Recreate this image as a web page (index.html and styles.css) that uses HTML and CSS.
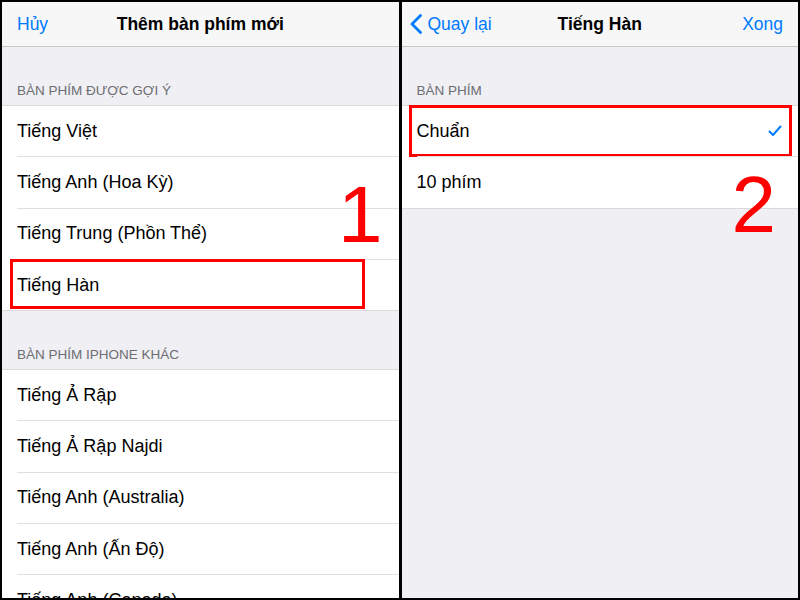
FILE: index.html
```html
<!DOCTYPE html>
<html>
<head>
<meta charset="utf-8">
<link rel="stylesheet" href="styles.css">
</head>
<body>
<div class="frame">
  <section class="panel">
    <header class="nav">
      <span class="nav-left">Hủy</span>
      <span class="nav-title">Thêm bàn phím mới</span>
      <span class="nav-right"></span>
    </header>
    <div class="section-head">BÀN PHÍM ĐƯỢC GỢI Ý</div>
    <ul class="list">
      <li class="row">Tiếng Việt</li>
      <li class="row">Tiếng Anh (Hoa Kỳ)</li>
      <li class="row">Tiếng Trung (Phồn Thể)</li>
      <li class="row hl hl-left">Tiếng Hàn</li>
    </ul>
    <div class="section-head">BÀN PHÍM IPHONE KHÁC</div>
    <ul class="list">
      <li class="row">Tiếng Ả Rập</li>
      <li class="row">Tiếng Ả Rập Najdi</li>
      <li class="row">Tiếng Anh (Australia)</li>
      <li class="row">Tiếng Anh (Ấn Độ)</li>
      <li class="row">Tiếng Anh (Canada)</li>
    </ul>
    <div class="step step-1">1</div>
  </section>
  <section class="panel">
    <header class="nav">
      <span class="nav-left back">
        <svg class="chev" width="14" height="20" viewBox="0 0 14 20"><path d="M11.5 1.5 L3 10 L11.5 18.5" fill="none" stroke="#007aff" stroke-width="2.8" stroke-linecap="round" stroke-linejoin="round"/></svg>
        Quay lại
      </span>
      <span class="nav-title">Tiếng Hàn</span>
      <span class="nav-right">Xong</span>
    </header>
    <div class="section-head">BÀN PHÍM</div>
    <ul class="list">
      <li class="row hl hl-right">Chuẩn
        <svg class="check" width="14" height="12" viewBox="0 0 14 12"><path d="M1.5 6.5 L5 10 L12.5 1.5" fill="none" stroke="#007aff" stroke-width="2" stroke-linecap="round" stroke-linejoin="round"/></svg>
      </li>
      <li class="row">10 phím</li>
    </ul>
    <div class="step step-2">2</div>
  </section>
</div>
</body>
</html>
```
FILE: styles.css
```css
*, *::before, *::after { box-sizing: border-box; }
html, body { margin: 0; padding: 0; }
body {
  width: 800px;
  height: 600px;
  overflow: hidden;
  font-family: "Liberation Sans", Arial, sans-serif;
  background: #000;
}
.frame {
  width: 800px;
  height: 600px;
  display: flex;
  gap: 3px;
  padding: 2px;
  background: #000;
}
.panel {
  flex: 1;
  position: relative;
  background: #efeff4;
  overflow: hidden;
}
.nav {
  height: 45px;
  background: #f7f7f7;
  border-bottom: 1px solid #c8c7cc;
  display: flex;
  align-items: center;
  justify-content: space-between;
  padding: 0 15px;
  position: relative;
}
.nav-left, .nav-right {
  color: #007aff;
  font-size: 17.5px;
  display: flex;
  align-items: center;
  position: relative;
  z-index: 1;
}
.back { margin-left: -8px; }
.chev { margin-right: 5px; }
.nav-title {
  position: absolute;
  left: 0;
  right: 0;
  text-align: center;
  font-size: 17.5px;
  font-weight: bold;
  color: #000;
  pointer-events: none;
}
.section-head {
  height: 59px;
  display: flex;
  align-items: flex-end;
  padding: 0 0 7px 15px;
  font-size: 13.5px;
  color: #6d6d72;
  border-bottom: 1px solid #d9d9de;
}
.list {
  list-style: none;
  margin: 0;
  padding: 0;
  background: #fff;
  border-bottom: 1px solid #d9d9de;
}
.row {
  height: 50.3px;
  display: flex;
  align-items: center;
  justify-content: space-between;
  padding: 0 16px 0 15px;
  font-size: 18px;
  color: #000;
  position: relative;
}
.row + .row { margin-top: 1px; }
.row + .row::before {
  content: "";
  position: absolute;
  top: -1px;
  left: 15px;
  right: 0;
  height: 1px;
  background: #e0e0e3;
}
.hl::after {
  content: "";
  position: absolute;
  border: 3px solid #ff0000;
  pointer-events: none;
}
.hl-left::after { left: 8px; width: 355px; top: -1px; height: 50px; }
.hl-right::after { left: 7px; right: 6px; top: -1px; height: 52px; }
.step {
  position: absolute;
  color: #ff0000;
  font-size: 80px;
  line-height: 1;
  font-family: "Liberation Sans", Arial, sans-serif;
}
.step-1 { left: 336px; top: 173px; }
.step-2 { left: 330px; top: 163px; }
```
